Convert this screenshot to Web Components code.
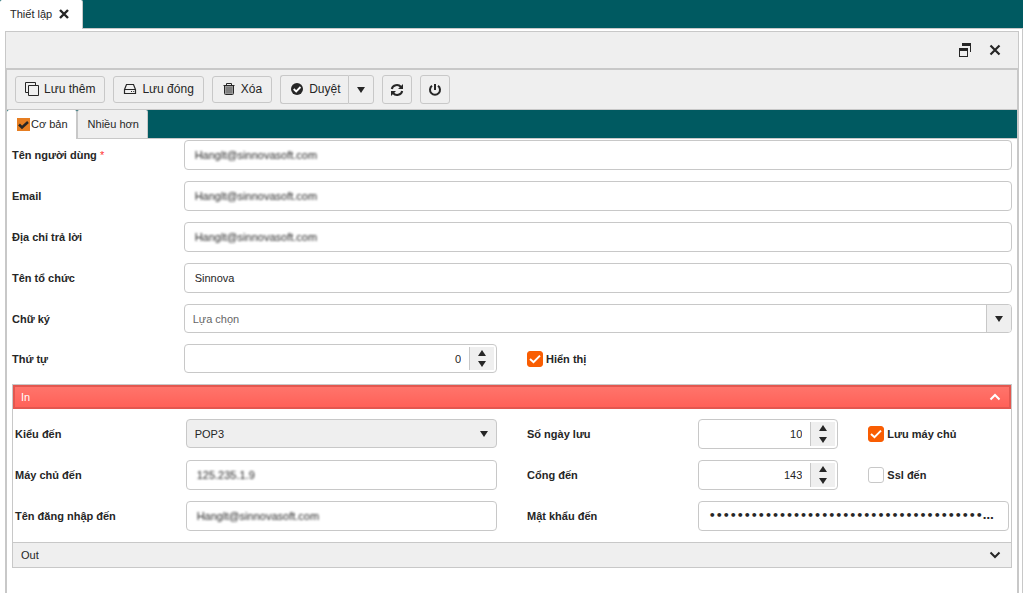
<!DOCTYPE html>
<html lang="vi">
<head>
<meta charset="utf-8">
<title>Thiết lập</title>
<style>
  html, body { margin: 0; height: 100%; }
  body {
    --line: #c8c8c8;
    --bar: #efefef;
    --ink: #262626;
    --teal: #005a61;
    --accent: #f95d02;
    font: 11px/16px "Liberation Sans", Arial, sans-serif;
    color: var(--ink);
    background: #fff;
  }
</style>
</head>
<body>
<settings-page></settings-page>

<script>
const base = `
  *, *::before { box-sizing: border-box; }
  button, input, select { font: inherit; color: inherit; margin: 0; padding: 0; border: 0; background: none; outline: 0; border-radius: 0; }
  button { cursor: pointer; }
  svg { display: block; flex: none; }
`;
const fieldCss = `
  :host { display: contents; }
  label { align-self: center; font-weight: bold; }
  .req { color: #f33; font-weight: normal; }
  .box { display: flex; min-width: 0; height: 30px; border: 1px solid var(--line); border-radius: 4px; background: #fff; overflow: hidden; grid-column: span var(--span, 2); }
  .box input, .box select { flex: 1; min-width: 0; width: 100%; }
  .low { height: 29px; }
`;
const caret = '<svg width="10" height="8" viewBox="0 0 10 8"><path d="M1 1h8L5 7z" fill="#262626"/></svg>';

class Base extends HTMLElement {
  connectedCallback() {
    if (this.shadowRoot) return;
    const root = this.attachShadow({ mode: 'open' });
    root.innerHTML = `<style>${base}${this.css()}</style>${this.html()}`;
    const span = this.getAttribute('span');
    if (span) this.style.setProperty('--span', span);
    this.ready(root);
  }
  attr(n) { return this.getAttribute(n) || ''; }
  css() { return ''; }
  html() { return '<slot></slot>'; }
  ready() {}
}

/* Labelled text box; "masked" softens the private value. */
customElements.define('text-field', class extends Base {
  css() { return fieldCss + `
    input { padding: 0 10px; }
    :host([masked]) input { filter: blur(1px); }
    input[type=password] { font-family: "DejaVu Sans", sans-serif; font-weight: bold; text-overflow: ellipsis; }`; }
  html() { return `<label for="f">${this.attr('label')}${this.hasAttribute('required') ? ' <span class="req">*</span>' : ''}</label>
    <div class="box"><input id="f" type="${this.attr('type') || 'text'}" value="${this.attr('value')}"></div>`; }
});

/* Text box with a drop-down button. */
customElements.define('combo-field', class extends Base {
  css() { return fieldCss + `
    input { padding: 0 8px; }
    input::placeholder { color: #666; opacity: 1; }
    button { display: flex; align-items: center; justify-content: center; width: 25px; border-left: 1px solid var(--line); background: var(--bar); }`; }
  html() { return `<label for="f">${this.attr('label')}</label>
    <div class="box low"><input id="f" type="text" placeholder="${this.attr('placeholder')}"><button type="button" aria-label="Mở danh sách">${caret}</button></div>`; }
});

customElements.define('select-field', class extends Base {
  css() { return fieldCss + `
    .box { position: relative; background: var(--bar); }
    select { appearance: none; padding: 0 28px 0 8px; }
    svg { position: absolute; right: 7px; top: 10px; pointer-events: none; }`; }
  html() { return `<label for="f">${this.attr('label')}</label>
    <div class="box low"><select id="f"><option>POP3</option><option>IMAP</option></select>${caret}</div>`; }
});

/* Number box with its own step buttons. */
customElements.define('number-field', class extends Base {
  css() { return fieldCss + `
    .box { padding: 2px; }
    :host([low]) .box { height: 29px; }
    input { text-align: right; padding: 0 8px; appearance: textfield; }
    input::-webkit-inner-spin-button { appearance: none; margin: 0; }
    .steps { display: flex; flex-direction: column; width: 25px; background: var(--bar); border-left: 1px solid var(--line); }
    .steps button { flex: 1; display: flex; align-items: center; justify-content: center; }
    .up svg { transform: rotate(180deg); }`; }
  html() { return `<label for="f">${this.attr('label')}</label>
    <div class="box"><input id="f" type="number" value="${this.attr('value')}">
    <div class="steps"><button type="button" class="up" aria-label="Tăng">${caret}</button><button type="button" class="down" aria-label="Giảm">${caret}</button></div></div>`; }
  ready(root) {
    const f = root.getElementById('f');
    root.querySelector('.up').onclick = () => f.stepUp();
    root.querySelector('.down').onclick = () => f.stepDown();
  }
});

customElements.define('check-field', class extends Base {
  css() { return `
    :host { display: flex; align-items: center; }
    label { display: flex; align-items: center; gap: 3px; font-weight: bold; }
    .tick { display: grid; width: 16px; height: 16px; }
    input, svg { grid-area: 1 / 1; }
    input { appearance: none; width: 16px; height: 16px; border: 1px solid var(--line); border-radius: 3px; background: #fff; }
    input:checked { background: var(--accent); border-color: var(--accent); }
    svg { pointer-events: none; visibility: hidden; }
    input:checked + svg { visibility: visible; }`; }
  html() { return `<label><span class="tick"><input type="checkbox"${this.hasAttribute('checked') ? ' checked' : ''}><svg width="16" height="16" viewBox="0 0 16 16"><path d="M3 8l3.5 3.2L13 4.6" fill="none" stroke="#fff" stroke-width="2"/></svg></span><span>${this.attr('label')}</span></label>`; }
});

customElements.define('tool-button', class extends Base {
  css() { return `
    :host { display: block; }
    button { display: flex; align-items: center; gap: 5px; height: 27px; padding: 0 9px 1px; border: 1px solid var(--line); border-radius: 3px; font-size: 12px; }
    :host([tall]) button { height: 29px; }
    :host([first]) button { border-radius: 3px 0 0 3px; border-right: 0; padding-right: 7px; }
    :host([last]) button { border-radius: 0 3px 3px 0; padding: 0 7px; }
    :host([icon]) button { padding: 0 7px; }`; }
  html() { return `<button type="button"${this.attr('name') ? ` aria-label="${this.attr('name')}"` : ''}><slot></slot></button>`; }
});

customElements.define('fold-panel', class extends Base {
  css() { return `
    :host { display: block; border-top: 1px solid var(--line); }
    summary { display: flex; align-items: center; justify-content: space-between; height: 24px; padding: 0 10px 0 8px; background: var(--bar); list-style: none; cursor: pointer; }
    details[open] summary { color: #fff; background: linear-gradient(#ff746b, #ff6158); border: 2px solid #e3574f; padding: 0 8px 0 6px; }
    details[open] svg { transform: rotate(180deg); }
    .body { padding: 10px 2px 11px; }`; }
  html() { return `<details${this.hasAttribute('open') ? ' open' : ''}><summary><span>${this.attr('heading')}</span><svg width="12" height="8" viewBox="0 0 12 8"><path d="M1.5 1.5L6 6l4.5-4.5" fill="none" stroke="currentColor" stroke-width="2"/></svg></summary><div class="body"><slot></slot></div></details>`; }
});

/* Six equal columns shared by every group of fields. */
customElements.define('field-grid', class extends Base {
  css() { return `:host { display: grid; grid-template-columns: repeat(6, minmax(0, 1fr)); gap: 11px 30px; }`; }
});

customElements.define('tab-item', class extends Base {
  css() { return `
    :host { display: flex; border-right: 1px solid var(--line); background: var(--bar); border-radius: 2px 2px 0 0; }
    :host([selected]) { background: #fff; margin-bottom: -1px; }
    button { display: flex; align-items: center; padding: 0 8px 0 10px; }
    :host([selected]) button { padding-bottom: 1px; }
    :host([closable]) button { padding-right: 13px; }`; }
  html() { return `<button type="button" role="tab" aria-selected="${this.hasAttribute('selected')}"><slot></slot></button>`; }
});

customElements.define('tab-strip', class extends Base {
  css() { return `
    :host { display: flex; height: 29px; background: var(--teal); border-bottom: 1px solid var(--line); }
    ::slotted(tab-item:nth-child(2)) { border-left: 1px solid var(--line); }`; }
  ready() { this.setAttribute('role', 'tablist'); }
});

customElements.define('settings-page', class extends Base {
  css() { return `
    :host { display: flex; flex-direction: column; min-height: 100vh; padding-right: 1px; box-sizing: border-box; }
    .page { flex: 1; display: flex; padding: 2px 3px 0 5px; border-right: 1px solid var(--line); }
    .window { flex: 1; min-width: 0; display: flex; flex-direction: column; border: 1px solid var(--line); border-bottom: 0; }
    header { display: flex; align-items: center; justify-content: flex-end; gap: 18px; height: 36px; padding-right: 17px; background: var(--bar); }
    header button { display: block; }
    .inner { flex: 1; border: 1px solid var(--line); border-width: 2px 1px 0; }
    .tools { display: flex; align-items: center; gap: 8px; height: 40px; padding: 0 8px; background: var(--bar); border-bottom: 1px solid var(--line); }
    .split { display: flex; }
    form { padding: 1px 5px 0; }
    .folds { margin-top: 11px; border: 1px solid var(--line); border-top: 0; }
    .mark { background: #e67e22; margin-right: 1px; }
    .x { margin-left: 7px; }
    `; }
  html() { return `
  <tab-strip><tab-item selected closable>Thiết lập <svg class="x" width="10" height="10" viewBox="0 0 10 10"><path d="M1 1l8 8M9 1L1 9" stroke="#262626" stroke-width="2.4" fill="none"/></svg></tab-item></tab-strip>
  <main class="page"><section class="window">
    <header>
      <button type="button" aria-label="Khôi phục"><svg width="12" height="14" viewBox="0 0 12 14"><path d="M3 0h9v9h-1V3H3zM0 5h9v9H0zm1 3v5h7V8z" fill="#262626" fill-rule="evenodd"/></svg></button>
      <button type="button" aria-label="Đóng"><svg width="12" height="12" viewBox="0 0 12 12"><path d="M1.5 1.5l9 9M10.5 1.5l-9 9" stroke="#262626" stroke-width="2.2" fill="none"/></svg></button>
    </header>
    <div class="inner">
      <div class="tools" role="toolbar">
        <tool-button><svg width="14" height="14" viewBox="0 0 14 14" fill="none" stroke="#262626"><path d="M3.5 3.5h10v10h-10zM3.5 10.5h-3v-10h10v3"/></svg>Lưu thêm</tool-button>
        <tool-button><svg width="14" height="14" viewBox="0 0 14 14" fill="none" stroke="#262626" stroke-width="1.2"><path d="M1.5 7.5L3.5 2.5h7L12.5 7.5v4h-11zM1.5 7.5h11M8 9.5h1M10.2 9.5h1"/></svg>Lưu đóng</tool-button>
        <tool-button><svg width="14" height="14" viewBox="0 0 14 14" fill="none" stroke="#262626"><path d="M3 4h8v8H3z" fill="#999" stroke="none"/><path d="M1.5 3.5h11M4.5 3V1.5h5V3M2.5 4v7.5q0 1 1 1h7q1 0 1-1V4"/><path d="M5 5v6M7 5v6M9 5v6" stroke="#666"/></svg>Xóa</tool-button>
        <div class="split">
          <tool-button tall first><svg width="14" height="14" viewBox="0 0 14 14"><circle cx="7" cy="7" r="6" fill="#262626"/><path d="M3.7 7l2.5 2.4L10.5 5" fill="none" stroke="#fff" stroke-width="1.8"/></svg>Duyệt</tool-button>
          <tool-button tall last name="Thêm lựa chọn">${caret}</tool-button>
        </div>
        <tool-button tall icon name="Làm mới"><svg width="14" height="14" viewBox="0 0 14 14"><path d="M1.8 6A5.2 4.8 0 0 1 11 4M12.2 8A5.2 4.8 0 0 1 3 10" fill="none" stroke="#262626" stroke-width="2"/><path d="M13 1v5H8zM1 13V8h5z" fill="#262626"/></svg></tool-button>
        <tool-button tall icon name="Tắt"><svg width="14" height="14" viewBox="0 0 14 14" fill="none" stroke="#262626" stroke-width="2"><path d="M4 2.8a5 5 0 1 0 6 0M7 1v6"/></svg></tool-button>
      </div>
      <tab-strip>
        <tab-item selected><svg class="mark" width="13" height="13" viewBox="0 0 13 13"><path d="M2 6.5l3 3L11 4" fill="none" stroke="#262626" stroke-width="2.5"/></svg>Cơ bản</tab-item>
        <tab-item>Nhiều hơn</tab-item>
      </tab-strip>
      <form>
        <field-grid>
          <text-field span="5" label="Tên người dùng" required masked value="Hanglt@sinnovasoft.com"></text-field>
          <text-field span="5" label="Email" masked value="Hanglt@sinnovasoft.com"></text-field>
          <text-field span="5" label="Địa chỉ trả lời" masked value="Hanglt@sinnovasoft.com"></text-field>
          <text-field span="5" label="Tên tổ chức" value="Sinnova"></text-field>
          <combo-field span="5" label="Chữ ký" placeholder="Lựa chọn"></combo-field>
          <number-field span="2" low label="Thứ tự" value="0"></number-field>
          <check-field label="Hiển thị" checked></check-field>
        </field-grid>
        <div class="folds">
          <fold-panel heading="In" open>
            <field-grid>
              <select-field label="Kiểu đến"></select-field>
              <number-field span="1" label="Số ngày lưu" value="10"></number-field>
              <check-field label="Lưu máy chủ" checked></check-field>
              <text-field label="Máy chủ đến" masked value="125.235.1.9"></text-field>
              <number-field span="1" label="Cổng đến" value="143"></number-field>
              <check-field label="Ssl đến"></check-field>
              <text-field label="Tên đăng nhập đến" masked value="Hanglt@sinnovasoft.com"></text-field>
              <text-field label="Mật khẩu đến" type="password" value="000000000000000000000000000000000000000000000000"></text-field>
            </field-grid>
          </fold-panel>
          <fold-panel heading="Out"></fold-panel>
        </div>
      </form>
    </div>
  </section></main>`; }
});
</script>
</body>
</html>
